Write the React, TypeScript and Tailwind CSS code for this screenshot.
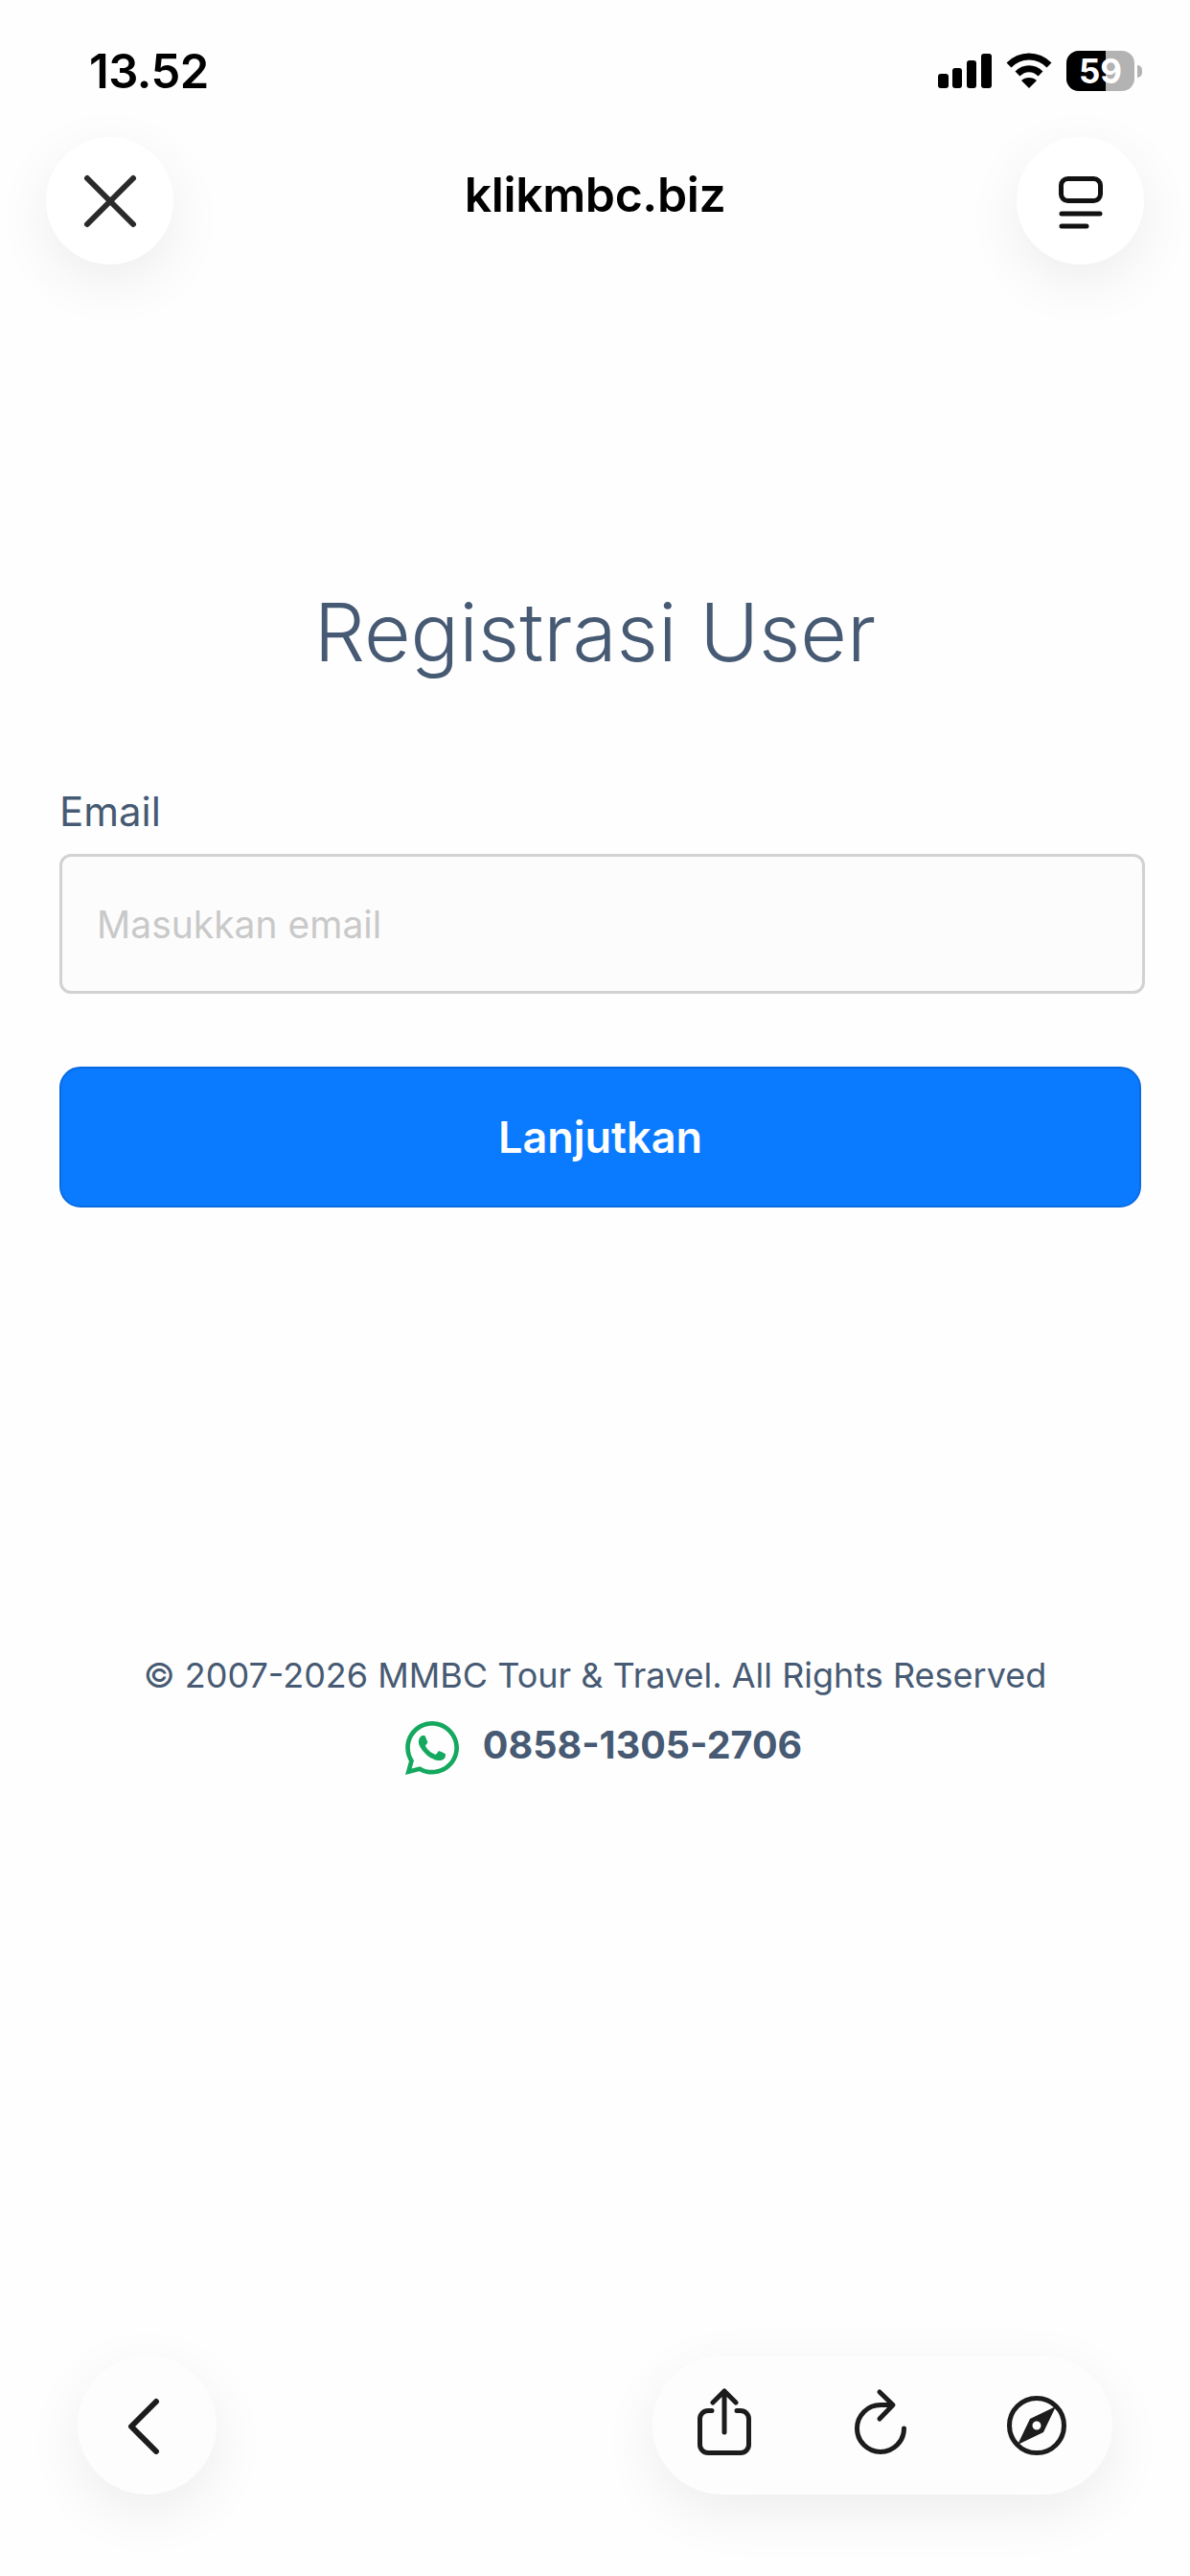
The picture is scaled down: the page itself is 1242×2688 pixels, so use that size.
import React from "react";
import { FaWhatsapp } from "react-icons/fa";

function StatusBar() {
  return (
    <div className="flex justify-between items-center h-[143px] pl-[93px] pr-[50px] pt-[5px]">
      <span className="text-[49px] font-semibold leading-none text-black tracking-[-0.5px]">13.52</span>
      <div className="flex items-center">
        <svg width="56" height="36" viewBox="0 0 56 36" fill="#000">
          <rect x="0" y="21" width="11" height="15" rx="3" />
          <rect x="15" y="15" width="10" height="21" rx="3" />
          <rect x="30" y="7" width="10" height="29" rx="3" />
          <rect x="45" y="0" width="11" height="36" rx="3" />
        </svg>
        <svg className="ml-[15px]" width="48" height="38" viewBox="0 0 48 38" fill="none" stroke="#000" strokeWidth="7">
          <path d="M3 13 C15 1 33 1 45 13" />
          <path d="M12 22 C19 15 29 15 36 22" />
          <path d="M24 37 L16 29 C20 25 28 25 32 29 Z" fill="#000" stroke="none" />
        </svg>
        <div className="relative ml-[15px] w-[71px] h-[42px] rounded-[13px] bg-[#b3b3b3] overflow-hidden">
          <div className="h-full w-[41px] bg-black" />
          <span className="absolute inset-0 flex items-center justify-center text-[35px] font-bold text-white leading-none">59</span>
        </div>
        <div className="ml-[3px] w-[5px] h-[13px] rounded-r-full bg-[#b3b3b3]" />
      </div>
    </div>
  );
}

function NavBar() {
  return (
    <div className="flex justify-between items-center px-[48px]">
      <button className="flex items-center justify-center w-[133px] h-[133px] rounded-full bg-white shadow-[0_18px_60px_rgba(0,0,0,0.07)]">
        <svg width="60" height="60" viewBox="0 0 60 60" fill="none" stroke="#2a2a2a" strokeWidth="6" strokeLinecap="round">
          <path d="M6 6 L54 54 M54 6 L6 54" />
        </svg>
      </button>
      <span className="text-[50px] font-semibold leading-none text-black mb-[14px] tracking-[-0.4px]">klikmbc.biz</span>
      <button className="flex items-center justify-center w-[133px] h-[133px] rounded-full bg-white shadow-[0_18px_60px_rgba(0,0,0,0.07)]">
        <svg width="64" height="64" viewBox="0 0 64 64" fill="none" stroke="#111" strokeWidth="5" strokeLinecap="round">
          <rect x="12.5" y="8.5" width="41" height="23" rx="7" />
          <path d="M13 45 H53 M13 58 H39" />
        </svg>
      </button>
    </div>
  );
}

function RegisterForm() {
  return (
    <div className="px-[62px] pt-[342px]">
      <h1 className="text-center text-[84px] font-light leading-none text-[#475a73] mb-[124px]">Registrasi User</h1>
      <label htmlFor="email" className="block text-[42px] leading-none text-[#475a73] mb-[23px]">
        Email
      </label>
      <input
        id="email"
        type="email"
        placeholder="Masukkan email"
        className="block w-[1133px] h-[146px] px-[36px] rounded-[12px] border-[3px] border-[#d2d2d2] bg-[#fcfcfc] text-[39px] outline-none placeholder:text-[#c9c9c9]"
      />
      <button className="block w-[1129px] h-[147px] mt-[76px] rounded-[22px] border-2 border-[#0a6be0] bg-[#0a7aff] text-[45px] font-semibold text-white">
        Lanjutkan
      </button>
    </div>
  );
}

function Footer() {
  return (
    <div className="flex flex-col items-center pt-[470px]">
      <p className="text-[36px] leading-none text-[#475a73]">© 2007-2026 MMBC Tour &amp; Travel. All Rights Reserved</p>
      <div className="flex items-center gap-[21px] mt-[26px] ml-[14px] text-[#475a73]">
        <FaWhatsapp className="w-[64px] h-[64px] text-[#15a85f]" />
        <span className="text-[39.5px] font-bold leading-none mb-[4px]">0858-1305-2706</span>
      </div>
    </div>
  );
}

function BottomBar() {
  return (
    <div className="flex justify-between items-center mt-auto mb-[85px] pl-[81px] pr-[81px]">
      <button className="flex items-center justify-center w-[145px] h-[145px] rounded-full bg-[#fdfdfd] shadow-[0_18px_60px_rgba(0,0,0,0.07)]">
        <svg width="60" height="60" viewBox="0 0 60 60" fill="none" stroke="#1c1c1c" strokeWidth="6" strokeLinecap="round" strokeLinejoin="round">
          <path d="M39 5 L13 31 L39 57" />
        </svg>
      </button>
      <div className="flex items-center gap-[83px] w-[480px] h-[145px] pl-[35px] rounded-full bg-[#fdfdfd] shadow-[0_18px_60px_rgba(0,0,0,0.07)]">
        <svg width="80" height="80" viewBox="0 0 80 80" fill="none" stroke="#1c1c1c" strokeWidth="5" strokeLinecap="round" strokeLinejoin="round">
          <path d="M27 24.5 H23 A8.5 8.5 0 0 0 14.5 33 V60 A8.5 8.5 0 0 0 23 68.5 H57 A8.5 8.5 0 0 0 65.5 60 V33 A8.5 8.5 0 0 0 57 24.5 H53" />
          <path d="M40 47 V4 M28 16 L40 4 L52 16" />
        </svg>
        <svg width="80" height="80" viewBox="0 0 80 80" fill="none" stroke="#1c1c1c" strokeWidth="5" strokeLinecap="round" strokeLinejoin="round">
          <path d="M64.5 43 A24.5 24.5 0 1 1 40 18.5 H51" />
          <path d="M39 5 L53 18.5 L39 33" />
        </svg>
        <svg width="80" height="80" viewBox="0 0 80 80" fill="none">
          <circle cx="40" cy="40" r="28.5" stroke="#1c1c1c" strokeWidth="5" />
          <path
            fillRule="evenodd"
            fill="#1c1c1c"
            d="M60 20 L47 47 L20 60 L33 33 Z M40 35.5 A4.5 4.5 0 1 0 40 44.5 A4.5 4.5 0 1 0 40 35.5 Z"
          />
        </svg>
      </div>
    </div>
  );
}

export default function App() {
  return (
    <div className="flex flex-col w-[1242px] h-[2688px] bg-[#fefefe] font-['Inter',sans-serif]">
      <StatusBar />
      <NavBar />
      <RegisterForm />
      <Footer />
      <BottomBar />
    </div>
  );
}
